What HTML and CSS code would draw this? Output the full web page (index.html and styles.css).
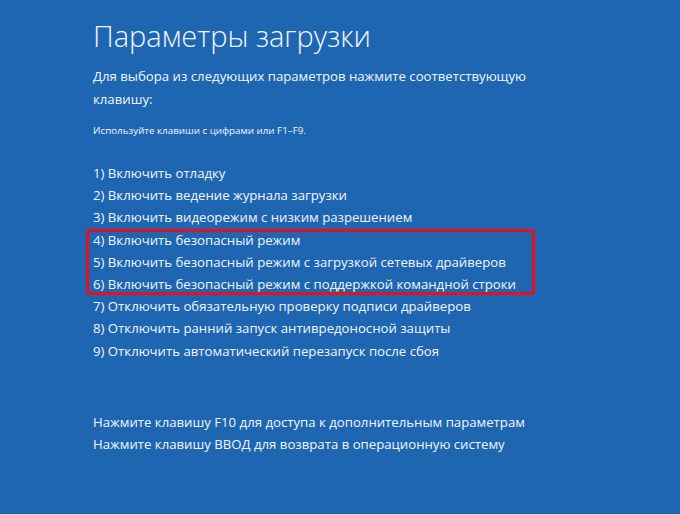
FILE: index.html
```html
<!DOCTYPE html>
<html lang="ru">
<head>
<meta charset="utf-8">
<link rel="stylesheet" href="styles.css">
</head>
<body>
<main class="screen">
  <h1 class="title">Параметры загрузки</h1>
  <p class="lead">Для выбора из следующих параметров нажмите соответствующую клавишу:</p>
  <p class="hint">Используйте клавиши с цифрами или F1–F9.</p>
  <ul class="options">
    <li>1) Включить отладку</li>
    <li>2) Включить ведение журнала загрузки</li>
    <li>3) Включить видеорежим с низким разрешением</li>
    <li class="group">
      <ul class="highlight">
        <li>4) Включить безопасный режим</li>
        <li>5) Включить безопасный режим с загрузкой сетевых драйверов</li>
        <li>6) Включить безопасный режим с поддержкой командной строки</li>
      </ul>
    </li>
    <li>7) Отключить обязательную проверку подписи драйверов</li>
    <li>8) Отключить ранний запуск антивредоносной защиты</li>
    <li>9) Отключить автоматический перезапуск после сбоя</li>
  </ul>
  <ul class="footer">
    <li>Нажмите клавишу F10 для доступа к дополнительным параметрам</li>
    <li>Нажмите клавишу ВВОД для возврата в операционную систему</li>
  </ul>
</main>
</body>
</html>
```
FILE: styles.css
```css
html, body {
  margin: 0;
  padding: 0;
  background: #1e66b2;
}
.screen {
  width: 680px;
  height: 514px;
  box-sizing: border-box;
  padding: 17px 0 0 93px;
  font-family: "Open Sans", "Noto Sans", sans-serif;
  color: #f2f6fb;
}
.title {
  margin: 0;
  font-size: 29px;
  font-weight: 300;
  line-height: 38px;
}
.lead {
  margin: 10px 0 0;
  width: 470px;
  font-size: 13.2px;
  line-height: 23px;
}
.hint {
  margin: 13px 0 0;
  font-size: 9.8px;
  line-height: 14px;
}
.options, .footer, .highlight {
  list-style: none;
  margin: 0;
  padding: 0;
}
.options {
  margin-top: 24px;
}
.options li, .footer li {
  font-size: 13.2px;
  line-height: 22.2px;
  white-space: nowrap;
}
.highlight {
  margin-left: -7px;
  padding-left: 4px;
  width: 439px;
  border: 3px solid #e8101a;
  border-radius: 4px;
}
.highlight li:first-child {
  margin-top: -3px;
}
.highlight li:last-child {
  margin-bottom: -3px;
}
.footer {
  margin-top: 49px;
}
```
